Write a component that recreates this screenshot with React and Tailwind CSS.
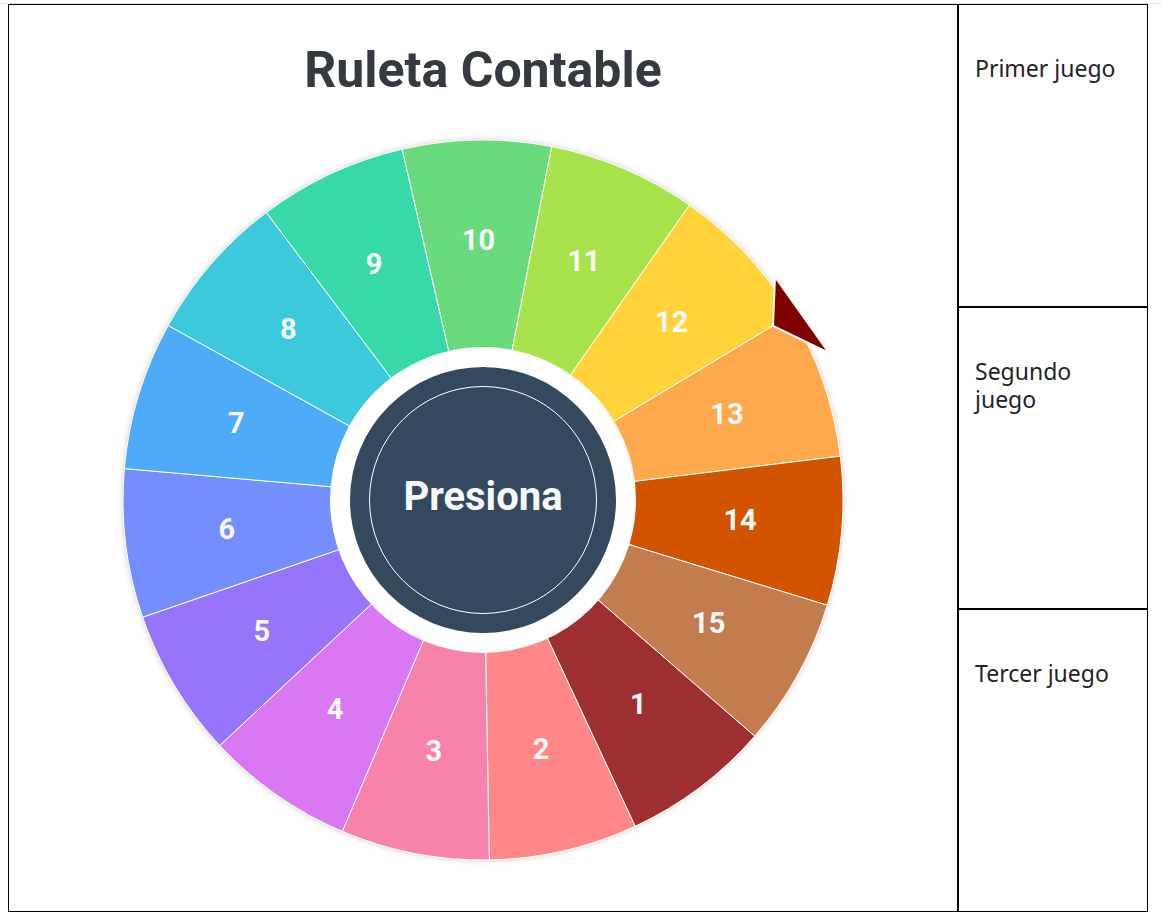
import { useState } from "react";

// Wheel order, clockwise starting at the top slice
const SLICES = [
  { n: 10, color: "#69db7c" },
  { n: 11, color: "#a9e34b" },
  { n: 12, color: "#ffd43b" },
  { n: 13, color: "#ffa94d" },
  { n: 14, color: "#d35400" },
  { n: 15, color: "#c27c4e" },
  { n: 1, color: "#9e2f31" },
  { n: 2, color: "#ff8787" },
  { n: 3, color: "#f783ac" },
  { n: 4, color: "#da77f2" },
  { n: 5, color: "#9775fa" },
  { n: 6, color: "#748ffc" },
  { n: 7, color: "#4dabf7" },
  { n: 8, color: "#3bc9db" },
  { n: 9, color: "#38d9a9" },
];

const SIZE = 720;
const C = SIZE / 2;
const R = 360;
const LABEL_R = 258;
const STEP = 360 / SLICES.length;

const rad = (deg) => (deg * Math.PI) / 180;
const pt = (deg, r) => [C + r * Math.cos(rad(deg)), C + r * Math.sin(rad(deg))];

function Wheel() {
  return (
    <svg width={SIZE} height={SIZE} viewBox={`0 0 ${SIZE} ${SIZE}`} className="block overflow-visible">
      {SLICES.map((s, i) => {
        const mid = -91 + i * STEP;
        const [x1, y1] = pt(mid - STEP / 2, R);
        const [x2, y2] = pt(mid + STEP / 2, R);
        return (
          <path
            key={s.n}
            d={`M${C},${C} L${x1},${y1} A${R},${R} 0 0 1 ${x2},${y2} Z`}
            fill={s.color}
            stroke="#ffffff"
            strokeWidth="1"
          />
        );
      })}
      {SLICES.map((s, i) => {
        const [x, y] = pt(-91 + i * STEP, LABEL_R);
        return (
          <text
            key={s.n}
            x={x}
            y={y - 2}
            textAnchor="middle"
            dominantBaseline="central"
            fill="#f8f9fa"
            style={{ fontFamily: "Roboto, 'Liberation Sans', sans-serif", fontWeight: 700, fontSize: 29 }}
          >
            {s.n}
          </text>
        );
      })}
      <circle cx={C} cy={C} r="153" fill="#ffffff" />
      {/* pointer */}
      <polygon points="652,137 650,186 706,213" fill="#800000" stroke="#ffffff" strokeWidth="2" />
    </svg>
  );
}

export default function App() {
  const [spins, setSpins] = useState(0);

  return (
    <div className="min-h-screen bg-white font-['Noto_Sans','Open_Sans',sans-serif] text-[#1f2328]">
      <div className="h-[4px] border-b border-[#e2e2e2]" />
      <div className="flex pl-[8px]">
        {/* Wheel area */}
        <main className="w-[950px] h-[908px] border border-black flex flex-col items-center">
          <h1 className="mt-[41px] text-[50px] leading-[48px] font-bold text-[#343a40] font-['Roboto','Liberation_Sans',sans-serif]">
            Ruleta Contable
          </h1>
          <div className="relative mt-[46px] w-[720px] h-[720px]">
            <div className="absolute inset-0 rounded-full shadow-[0_0_6px_rgba(0,0,0,0.22)]" />
            <div className="relative">
              <Wheel />
            </div>
            <button
              type="button"
              onClick={() => setSpins(spins + 1)}
              className="absolute left-[227px] top-[227px] w-[266px] h-[266px] rounded-full bg-[#34495e] flex items-center justify-center"
            >
              <span className="w-[228px] h-[228px] pb-[6px] rounded-full border-[1.5px] border-white flex items-center justify-center text-[40px] font-bold text-[#f8f9fa] font-['Roboto','Liberation_Sans',sans-serif]">
                Presiona
              </span>
            </button>
          </div>
        </main>

        {/* Games */}
        <aside className="w-[190px] h-[908px] flex flex-col">
          {["Primer juego", "Segundo juego", "Tercer juego"].map((g) => (
            <div key={g} className="flex-1 border border-black px-4 pt-[49px]">
              <div className="text-[23px] leading-[28px]">{g}</div>
            </div>
          ))}
        </aside>
      </div>
    </div>
  );
}
